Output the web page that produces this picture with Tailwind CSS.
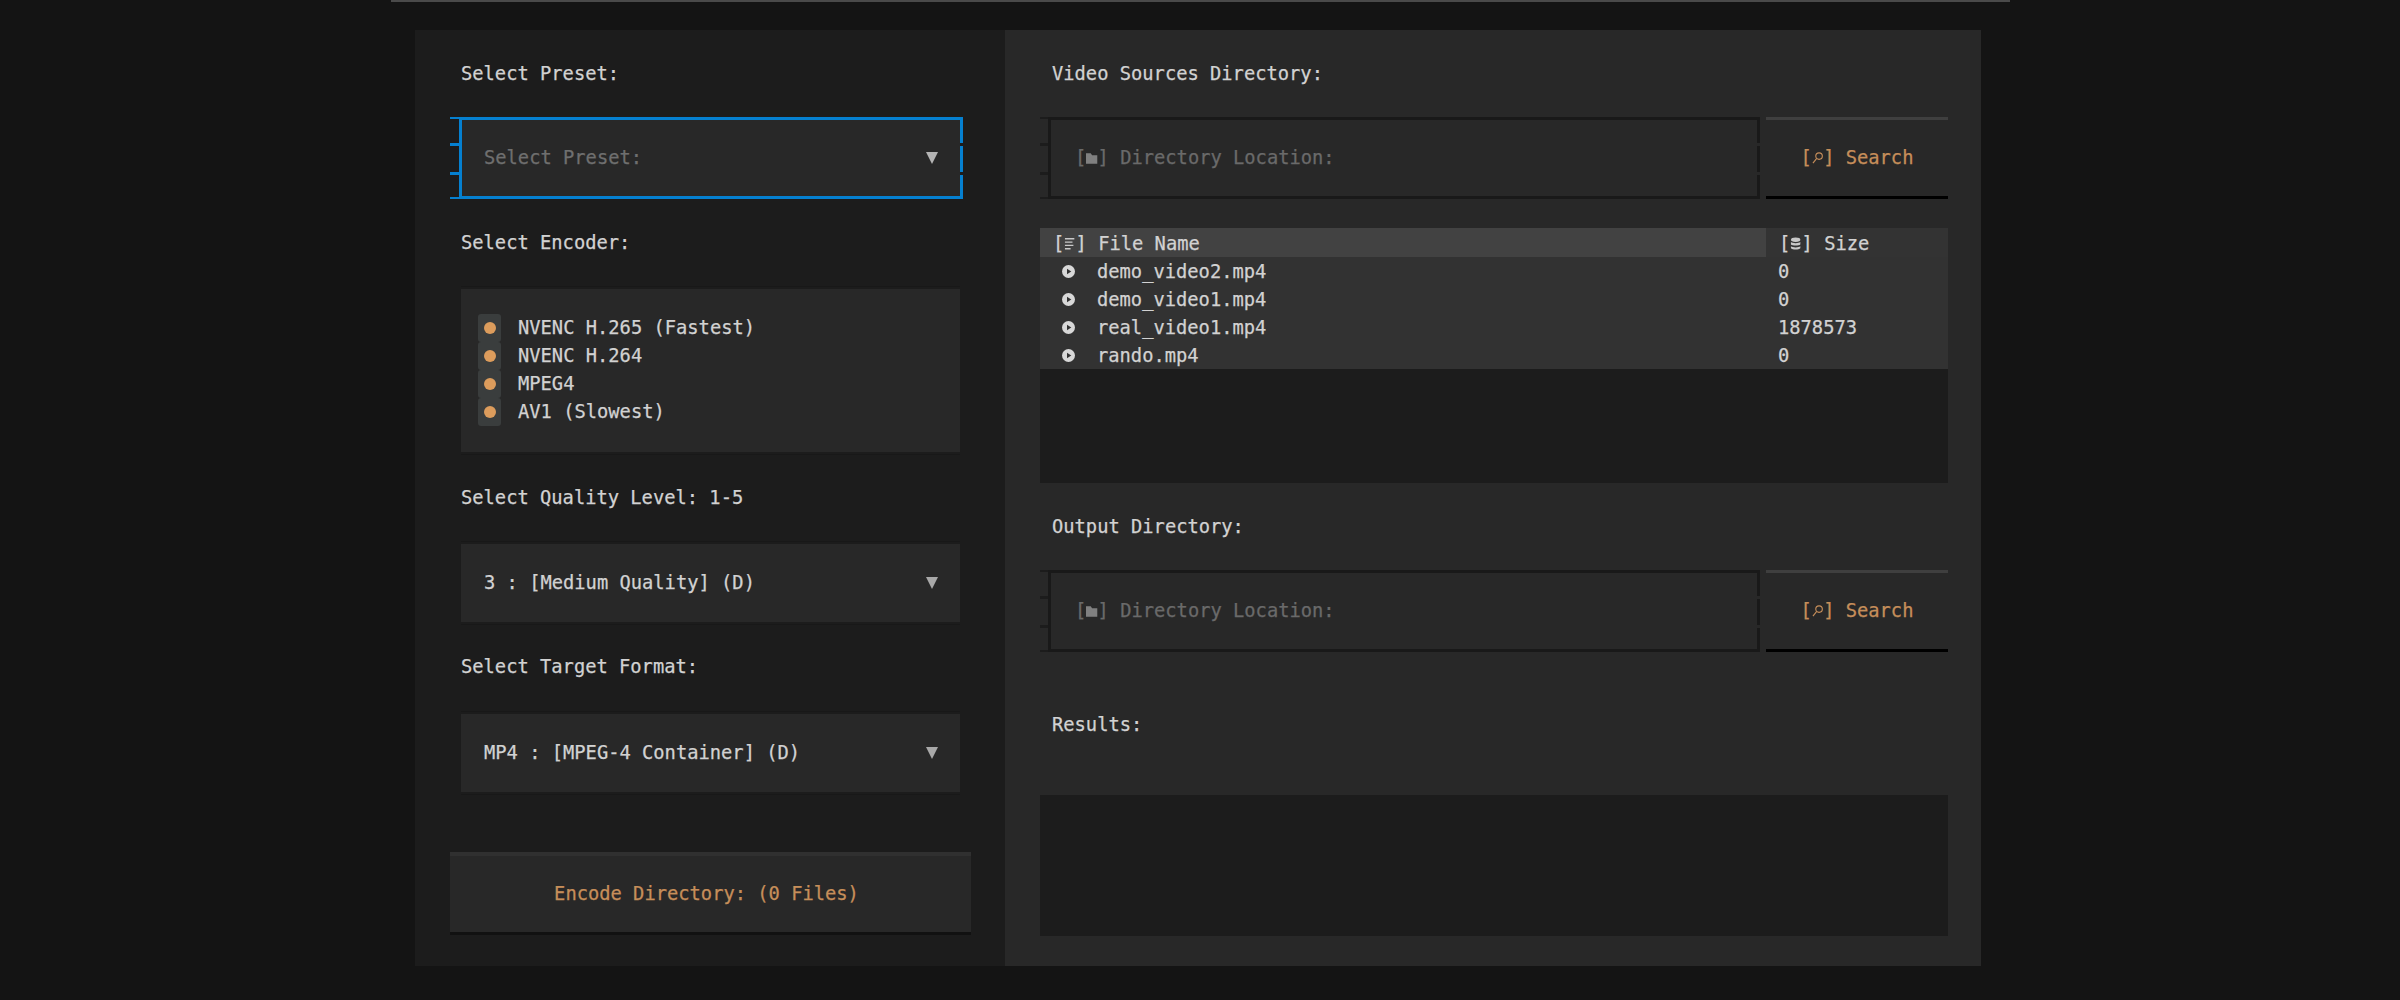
<!DOCTYPE html>
<html lang="en">

<head>
    <meta charset="utf-8" />
    <title>Encoder</title>
    <script src="https://cdn.jsdelivr.net/npm/@tailwindcss/browser@4"></script>
</head>

<body class="bg-[#141414] h-[1000px] overflow-hidden font-['DejaVu_Sans_Mono',monospace] text-[18.75px] leading-7 text-[#d2d2d2] [-webkit-text-stroke:0.25px]">

    <div class="w-[1619px] ml-[391px] h-[2px] bg-[#4a4a4a]"></div>

    <div class="flex w-[1566px] h-[936px] ml-[415px] mt-[28px]">

        <!-- left column -->
        <div class="w-[590px] shrink-0 bg-[#1c1c1c] pt-[28px] pl-[46px] pr-[45px]">
            <div class="h-7 pt-[2px]">Select Preset:</div>

            <div class="relative mt-[31px] -ml-[2px] -mr-[3px] h-[82px] border-[3px] border-[#0580d0] bg-[#282828] flex items-center justify-between pl-[22px] pr-[22px] text-[#6f6f6f]">
                <span>Select Preset:</span>
                <svg class="w-[12px] h-[12px]" viewBox="0 0 12 12"><polygon points="0,0 12,0 6,12" fill="#b4b4b4" /></svg>
                <!-- ticks on the edges of the focused field -->
                <div class="absolute left-[-12px] top-[-3px] w-[9px] h-[2px] bg-[#0580d0]"></div>
                <div class="absolute left-[-12px] top-[23px] w-[9px] h-[3px] bg-[#0580d0]"></div>
                <div class="absolute left-[-12px] top-[52px] w-[9px] h-[3px] bg-[#0580d0]"></div>
                <div class="absolute left-[-12px] bottom-[-3px] w-[9px] h-[2px] bg-[#0580d0]"></div>
                <div class="absolute right-[-3px] top-[23px] w-[3px] h-[3px] bg-[#1c1c1c]"></div>
                <div class="absolute right-[-3px] top-[52px] w-[3px] h-[3px] bg-[#1c1c1c]"></div>
            </div>

            <div class="h-7 mt-[30px]">Select Encoder:</div>

            <div class="mt-[29px] h-[169px] py-[2px] border-y border-[#181818]">
                <div class="h-[163px] bg-[#282828] pl-[17px] pt-[25px]">
                    <div class="flex items-center h-7">
                        <div class="w-[23px] h-7 rounded-[3px] bg-[#3a3d3d] flex items-center justify-center"><div class="w-3 h-3 rounded-full bg-[#dc9c5c]"></div></div>
                        <span class="ml-[17px]">NVENC H.265 (Fastest)</span>
                    </div>
                    <div class="flex items-center h-7">
                        <div class="w-[23px] h-7 rounded-[3px] bg-[#3a3d3d] flex items-center justify-center"><div class="w-3 h-3 rounded-full bg-[#dc9c5c]"></div></div>
                        <span class="ml-[17px]">NVENC H.264</span>
                    </div>
                    <div class="flex items-center h-7">
                        <div class="w-[23px] h-7 rounded-[3px] bg-[#3a3d3d] flex items-center justify-center"><div class="w-3 h-3 rounded-full bg-[#dc9c5c]"></div></div>
                        <span class="ml-[17px]">MPEG4</span>
                    </div>
                    <div class="flex items-center h-7">
                        <div class="w-[23px] h-7 rounded-[3px] bg-[#3a3d3d] flex items-center justify-center"><div class="w-3 h-3 rounded-full bg-[#dc9c5c]"></div></div>
                        <span class="ml-[17px]">AV1 (Slowest)</span>
                    </div>
                </div>
            </div>

            <div class="h-7 mt-[28px] pt-[1px]">Select Quality Level: 1-5</div>

            <div class="mt-[30px] h-[84px] py-[2px] border-y border-[#181818]">
                <div class="h-[78px] bg-[#282828] flex items-center justify-between pl-[23px] pr-[22px]">
                    <span>3 : [Medium Quality] (D)</span>
                    <svg class="w-[12px] h-[12px]" viewBox="0 0 12 12"><polygon points="0,0 12,0 6,12" fill="#a8a8a8" /></svg>
                </div>
            </div>

            <div class="h-7 mt-[28px]">Select Target Format:</div>

            <div class="mt-[30px] h-[84px] py-[2px] border-y border-[#181818]">
                <div class="h-[78px] bg-[#282828] flex items-center justify-between pl-[23px] pr-[22px]">
                    <span>MP4 : [MPEG-4 Container] (D)</span>
                    <svg class="w-[12px] h-[12px]" viewBox="0 0 12 12"><polygon points="0,0 12,0 6,12" fill="#a8a8a8" /></svg>
                </div>
            </div>

            <div class="mt-[57px] -mx-[11px] h-[83px] bg-[#282828] border-t-[4px] border-t-[#303030] border-b-[3px] border-b-[#111111] flex items-center justify-center pr-[8px] text-[#c68e5a]">
                Encode Directory: (0 Files)
            </div>
        </div>

        <!-- right column -->
        <div class="flex-1 bg-[#282828] pt-[28px] pl-[35px] pr-[33px]">
            <div class="h-7 pl-3 pt-[2px]">Video Sources Directory:</div>

            <div class="flex mt-[31px] h-[82px]">
                <div class="relative ml-[8px] w-[712px] border-[3px] border-[#191919] flex items-center pl-[24px] text-[#6a6a6a]">
                    <span class="flex items-center">[<svg class="w-[1ch] h-[14px]" viewBox="0 0 12 14"><path d="M0 2h5l1.500 2H12v9H0z" fill="#808080" /></svg>] Directory Location:</span>
                    <div class="absolute left-[-11px] top-[-3px] w-[8px] h-[2px] bg-[#1c1c1c]"></div>
                    <div class="absolute left-[-11px] top-[23px] w-[8px] h-[3px] bg-[#1c1c1c]"></div>
                    <div class="absolute left-[-11px] top-[52px] w-[8px] h-[3px] bg-[#1c1c1c]"></div>
                    <div class="absolute left-[-11px] bottom-[-3px] w-[8px] h-[2px] bg-[#1c1c1c]"></div>
                    <div class="absolute right-[-3px] top-[23px] w-[3px] h-[3px] bg-[#282828]"></div>
                    <div class="absolute right-[-3px] top-[52px] w-[3px] h-[3px] bg-[#282828]"></div>
                </div>
                <div class="ml-[6px] w-[182px] border-t-[3px] border-t-[#3f3f3f] border-b-[3px] border-b-black flex items-center justify-center text-[#c68e5a]">
                    <span class="flex items-center">[<svg class="w-[1ch] h-[16px]" viewBox="0 0 12 16" fill="none" stroke="#c68e5a" stroke-width="1.200"><circle cx="7.500" cy="6" r="3.500" /><path d="M5 8.500 1 13.500" /></svg>] Search</span>
                </div>
            </div>

            <div class="mt-[29px] h-[255px] bg-[#1c1c1c]">
                <div class="flex h-[29px] items-center">
                    <div class="w-[726px] h-full bg-[#424242] flex items-center pl-[13px] pt-[2px]">
                        <span class="flex items-center">[<svg class="w-[1ch] h-[16px]" viewBox="0 0 12 16" stroke="#c8c8c8" stroke-width="1.500"><path d="M1 2.500h10M1 6h8M1 9.500h9M1 13h6" /></svg>] File Name</span>
                    </div>
                    <div class="flex-1 h-full bg-[#333333] flex items-center pl-[13px] pt-[2px]">
                        <span class="flex items-center">[<svg class="w-[1ch] h-[16px]" viewBox="0 0 12 16" fill="#c8c8c8"><ellipse cx="6" cy="3.500" rx="5" ry="2.300" /><path d="M1 6c1.500 1.600 8.500 1.600 10 0v2.500c-1.500 1.600-8.500 1.600-10 0zM1 10.500c1.500 1.600 8.500 1.600 10 0v2c-1.500 1.900-8.500 1.900-10 0z" /></svg>] Size</span>
                    </div>
                </div>
                <div class="flex h-7 items-center bg-[#323232]">
                    <div class="w-[726px] flex items-center pl-[22px]">
                        <svg class="w-[13px] h-[13px]" viewBox="0 0 13 13"><circle cx="6.500" cy="6.500" r="6.500" fill="#d8d8d8" /><polygon points="5,3.800 9.300,6.500 5,9.200" fill="#323232" /></svg>
                        <span class="ml-[22px] pt-[2px]">demo_video2.mp4</span>
                    </div>
                    <div class="pl-3 pt-[2px]">0</div>
                </div>
                <div class="flex h-7 items-center bg-[#323232]">
                    <div class="w-[726px] flex items-center pl-[22px]">
                        <svg class="w-[13px] h-[13px]" viewBox="0 0 13 13"><circle cx="6.500" cy="6.500" r="6.500" fill="#d8d8d8" /><polygon points="5,3.800 9.300,6.500 5,9.200" fill="#323232" /></svg>
                        <span class="ml-[22px] pt-[2px]">demo_video1.mp4</span>
                    </div>
                    <div class="pl-3 pt-[2px]">0</div>
                </div>
                <div class="flex h-7 items-center bg-[#323232]">
                    <div class="w-[726px] flex items-center pl-[22px]">
                        <svg class="w-[13px] h-[13px]" viewBox="0 0 13 13"><circle cx="6.500" cy="6.500" r="6.500" fill="#d8d8d8" /><polygon points="5,3.800 9.300,6.500 5,9.200" fill="#323232" /></svg>
                        <span class="ml-[22px] pt-[2px]">real_video1.mp4</span>
                    </div>
                    <div class="pl-3 pt-[2px]">1878573</div>
                </div>
                <div class="flex h-7 items-center bg-[#323232]">
                    <div class="w-[726px] flex items-center pl-[22px]">
                        <svg class="w-[13px] h-[13px]" viewBox="0 0 13 13"><circle cx="6.500" cy="6.500" r="6.500" fill="#d8d8d8" /><polygon points="5,3.800 9.300,6.500 5,9.200" fill="#323232" /></svg>
                        <span class="ml-[22px] pt-[2px]">rando.mp4</span>
                    </div>
                    <div class="pl-3 pt-[2px]">0</div>
                </div>
            </div>

            <div class="h-7 mt-[30px] pl-3">Output Directory:</div>

            <div class="flex mt-[29px] h-[82px]">
                <div class="relative ml-[8px] w-[712px] border-[3px] border-[#191919] flex items-center pl-[24px] text-[#6a6a6a]">
                    <span class="flex items-center">[<svg class="w-[1ch] h-[14px]" viewBox="0 0 12 14"><path d="M0 2h5l1.500 2H12v9H0z" fill="#808080" /></svg>] Directory Location:</span>
                    <div class="absolute left-[-11px] top-[-3px] w-[8px] h-[2px] bg-[#1c1c1c]"></div>
                    <div class="absolute left-[-11px] top-[23px] w-[8px] h-[3px] bg-[#1c1c1c]"></div>
                    <div class="absolute left-[-11px] top-[52px] w-[8px] h-[3px] bg-[#1c1c1c]"></div>
                    <div class="absolute left-[-11px] bottom-[-3px] w-[8px] h-[2px] bg-[#1c1c1c]"></div>
                    <div class="absolute right-[-3px] top-[23px] w-[3px] h-[3px] bg-[#282828]"></div>
                    <div class="absolute right-[-3px] top-[52px] w-[3px] h-[3px] bg-[#282828]"></div>
                </div>
                <div class="ml-[6px] w-[182px] border-t-[3px] border-t-[#3f3f3f] border-b-[3px] border-b-black flex items-center justify-center text-[#c68e5a]">
                    <span class="flex items-center">[<svg class="w-[1ch] h-[16px]" viewBox="0 0 12 16" fill="none" stroke="#c68e5a" stroke-width="1.200"><circle cx="7.500" cy="6" r="3.500" /><path d="M5 8.500 1 13.500" /></svg>] Search</span>
                </div>
            </div>

            <div class="h-7 mt-[59px] pl-3">Results:</div>

            <div class="mt-[56px] h-[141px] bg-[#1c1c1c]"></div>
        </div>
    </div>

</body>

</html>
